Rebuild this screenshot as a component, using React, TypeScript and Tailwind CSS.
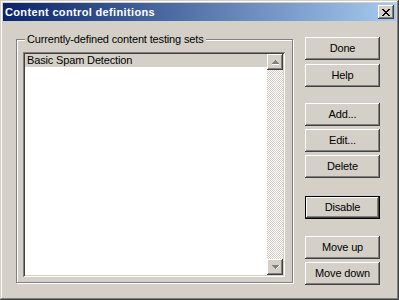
import React from "react";

const raised =
  "bg-[#d4d0c8] shadow-[inset_-1px_-1px_0_#404040,inset_1px_1px_0_#ffffff,inset_-2px_-2px_0_#808080,inset_2px_2px_0_#d4d0c8]";

function Btn({ label, className = "", isDefault = false }: { label: string; className?: string; isDefault?: boolean }) {
  if (isDefault) {
    return (
      <div className={`w-[75px] h-[23px] border border-black ${className}`}>
        <div className={`w-full h-full flex items-center justify-center ${raised}`}>
          <span className="leading-[13px]">{label}</span>
        </div>
      </div>
    );
  }
  return (
    <div className={`w-[75px] h-[23px] flex items-center justify-center ${raised} ${className}`}>
      <span className="leading-[13px]">{label}</span>
    </div>
  );
}

function Arrow({ up }: { up: boolean }) {
  return (
    <div className={`w-[16px] h-[16px] flex items-center justify-center ${raised}`}>
      <svg width="9" height="6" viewBox="0 0 9 6">
        {up ? (
          <>
            <path d="M1 5h7v1H1z" fill="#ffffff" />
            <path d="M4 1h1v1H4zM3 2h3v1H3zM2 3h5v1H2zM1 4h7v1H1z" fill="#808080" />
          </>
        ) : (
          <>
            <path d="M5 4h1v1H5zM6 3h1v1H6zM7 2h1v1H7zM8 1h1v1H8z" fill="#ffffff" />
            <path d="M1 1h7v1H1zM2 2h5v1H2zM3 3h3v1H3zM4 4h1v1H4z" fill="#808080" />
          </>
        )}
      </svg>
    </div>
  );
}

export default function App() {
  return (
    <div
      className="w-[399px] h-[300px] bg-[#d4d0c8] p-[3px] flex flex-col text-[11px] tracking-[-0.15px] text-black shadow-[inset_-1px_-1px_0_#404040,inset_1px_1px_0_#d4d0c8,inset_-2px_-2px_0_#808080,inset_2px_2px_0_#ffffff]"
      style={{ fontFamily: '"Liberation Sans", Arial, sans-serif' }}
    >
      {/* Title bar */}
      <div className="h-[18px] flex items-center justify-between pl-[2px] pr-[2px] bg-[linear-gradient(to_right,#0a246a,#a6caf0)]">
        <span className="text-white font-bold text-[11px] tracking-[0.35px] leading-[13px]">Content control definitions</span>
        <div className={`w-[16px] h-[14px] flex items-center justify-center ${raised}`}>
          <svg width="8" height="7" viewBox="0 0 8 7">
            <path
              d="M0 0h2v1H0zM6 0h2v1H6zM1 1h2v1H1zM5 1h2v1H5zM2 2h4v1H2zM3 3h2v1H3zM2 4h4v1H2zM1 5h2v1H1zM5 5h2v1H5zM0 6h2v1H0zM6 6h2v1H6z"
              fill="#000"
            />
          </svg>
        </div>
      </div>

      {/* Body */}
      <div className="flex flex-1 pl-[13px]">
        {/* Group box */}
        <div className="relative mt-[18px] w-[277px] h-[244px] border border-[#808080] shadow-[1px_1px_0_#ffffff,inset_1px_1px_0_#ffffff] pl-[6px] pt-[12px]">
          <span className="absolute top-[-7px] left-[8px] bg-[#d4d0c8] px-[2px] leading-[13px]">
            Currently-defined content testing sets
          </span>
          {/* Listbox */}
          <div className="w-[262px] h-[225px] flex p-[2px] bg-white shadow-[inset_1px_1px_0_#808080,inset_-1px_-1px_0_#ffffff,inset_2px_2px_0_#404040,inset_-2px_-2px_0_#d4d0c8]">
            <div className="flex-1 flex flex-col">
              <div className="h-[13px] bg-[#d4d0c8] pl-[2px] leading-[13px]">Basic Spam Detection</div>
            </div>
            <div className="w-[16px] flex flex-col bg-[repeating-conic-gradient(#d4d0c8_0_25%,#ffffff_0_50%)] bg-[length:2px_2px]">
              <Arrow up={true} />
              <div className="flex-1" />
              <Arrow up={false} />
            </div>
          </div>
        </div>

        {/* Buttons */}
        <div className="flex flex-col ml-[12px] mt-[16px]">
          <Btn label="Done" />
          <Btn label="Help" className="mt-[4px]" />
          <Btn label="Add..." className="mt-[16px]" />
          <Btn label="Edit..." className="mt-[3px]" />
          <Btn label="Delete" className="mt-[3px]" />
          <Btn label="Disable" className="mt-[18px]" isDefault={true} />
          <Btn label="Move up" className="mt-[17px]" />
          <Btn label="Move down" className="mt-[3px]" />
        </div>
      </div>
    </div>
  );
}
